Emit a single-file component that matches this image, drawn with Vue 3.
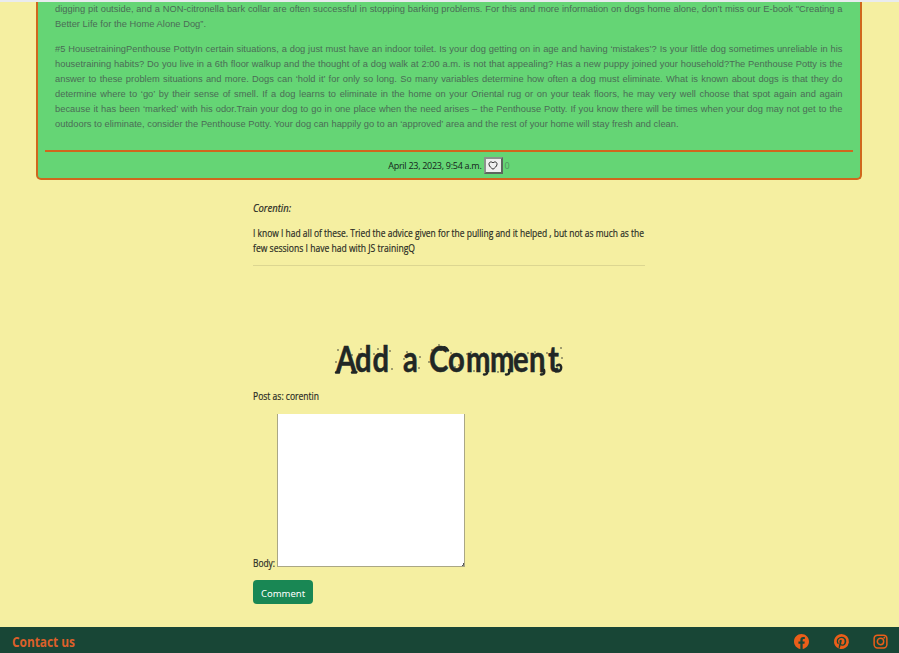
<script setup>
const lines = [
  { t: 'digging pit outside, and a NON-citronella bark collar are often successful in stopping barking problems. For this and more information on dogs home alone, don’t miss our E-book "Creating a' },
  { t: 'Better Life for the Home Alone Dog”.', end: true },
  { t: '#5 HousetrainingPenthouse PottyIn certain situations, a dog just must have an indoor toilet. Is your dog getting on in age and having ‘mistakes’? Is your little dog sometimes unreliable in his', gap: true },
  { t: 'housetraining habits? Do you live in a 6th floor walkup and the thought of a dog walk at 2:00 a.m. is not that appealing? Has a new puppy joined your household?The Penthouse Potty is the' },
  { t: 'answer to these problem situations and more. Dogs can ‘hold it’ for only so long. So many variables determine how often a dog must eliminate. What is known about dogs is that they do' },
  { t: 'determine where to ‘go’ by their sense of smell. If a dog learns to eliminate in the home on your Oriental rug or on your teak floors, he may very well choose that spot again and again' },
  { t: 'because it has been ‘marked’ with his odor.Train your dog to go in one place when the need arises – the Penthouse Potty. If you know there will be times when your dog may not get to the' },
  { t: 'outdoors to eliminate, consider the Penthouse Potty. Your dog can happily go to an ‘approved’ area and the rest of your home will stay fresh and clean.', end: true },
]
const scale = 0.79
const titleX = [1, 20, 37.5, 55, 68, 84, 94, 113, 131, 155, 178, 194, 213].map((x) => (x / scale).toFixed(1)).join(' ')
const dots = [
  [3, 8], [1, 20], [17, 13], [22, 30], [24, 12], [26, 7], [39, 12], [43, 7], [55, 9], [57, 27],
  [69, 17], [72, 10], [85, 15], [84, 26], [94, 20], [97, 8], [104, 3], [116, 11], [120, 25], [124, 23], [132, 12],
  [136, 10], [139, 29], [149, 11], [157, 11], [163, 30], [172, 10], [180, 10], [193, 11], [200, 10], [207, 31], [212, 11], [226, 6], [227, 16],
]
</script>

<template>
  <div class="page">
    <div class="strip"></div>
    <article class="card">
      <div class="copy">
        <p v-for="(l, i) in lines" :key="i" :class="{ end: l.end, gap: l.gap }">{{ l.t }}</p>
      </div>
      <div class="meta">
        <span class="date">April 23, 2023, 9:54 a.m.</span>
        <button class="like" aria-label="Like">
          <svg width="10" height="9" viewBox="0 0 16 15"><path d="M8 13.7C-4 6 2.8-1.8 8 3.1c5.2-4.9 12 2.9 0 10.6Z" fill="none" stroke="#222" stroke-width="1.6" /></svg>
        </button>
        <span class="count">0</span>
      </div>
    </article>

    <main class="column">
      <svg class="row" width="392" height="15"><text class="it" x="0" y="11" textLength="38" lengthAdjust="spacingAndGlyphs">Corentin:</text></svg>
      <svg class="row comment" width="392" height="30">
        <text x="0" y="11" textLength="391" lengthAdjust="spacingAndGlyphs">I know I had all of these. Tried the advice given for the pulling and it helped , but not as much as the</text>
        <text x="0" y="26" textLength="162" lengthAdjust="spacingAndGlyphs">few sessions I have had with JS trainingQ</text>
      </svg>
      <hr />
      <svg class="title" width="230" height="40" viewBox="0 0 230 40">
        <text :transform="`scale(${scale} 1)`" :x="titleX" y="30">Add a Comment</text>
        <path class="curl" d="M1 30.5h3M17 30.5h4M106 7.5q4-5 7 1M152 28q1 5-3 4.500M174 28q1 5-3 4.500M209 28q1 5-3 4.500M221 29.500q6 0 5-5q-1-3-4-1" />
        <circle v-for="(d, i) in dots" :key="i" :cx="d[0]" :cy="d[1]" r=".75" />
      </svg>
      <svg class="row post" width="392" height="15"><text x="0" y="11" textLength="66" lengthAdjust="spacingAndGlyphs">Post as: corentin</text></svg>
      <div class="field">
        <svg class="row" width="24" height="15"><text x="0" y="11" textLength="22" lengthAdjust="spacingAndGlyphs">Body:</text></svg>
        <div class="area"><svg width="3" height="3"><path d="M2.5 0v2.5H1" fill="none" stroke="#555" /></svg></div>
      </div>
      <button class="submit">Comment</button>
    </main>

    <footer>
      <svg class="contact" width="64" height="20"><text x="0" y="16" textLength="63" lengthAdjust="spacingAndGlyphs">Contact us</text></svg>
      <nav>
        <svg width="15" height="15" viewBox="0 0 16 16"><path d="M16 8.05C16 3.6 12.42 0 8 0S0 3.6 0 8.05C0 12.07 2.93 15.4 6.75 16v-5.62H4.72V8.05h2.03V6.28c0-2.02 1.2-3.13 3.02-3.13.88 0 1.8.16 1.8.16v1.98h-1.01c-1 0-1.31.62-1.31 1.26v1.5h2.22l-.35 2.33H9.25V16C13.07 15.4 16 12.07 16 8.05" /></svg>
        <svg width="15" height="15" viewBox="0 0 16 16"><path d="M8 0a8 8 0 0 0-2.92 15.45c-.07-.63-.13-1.6.03-2.3l.94-3.97s-.24-.48-.24-1.19c0-1.11.65-1.94 1.45-1.94.68 0 1.01.51 1.01 1.13 0 .69-.43 1.71-.66 2.66-.19.8.4 1.45 1.18 1.45 1.42 0 2.51-1.5 2.51-3.66 0-1.91-1.37-3.25-3.34-3.25-2.27 0-3.61 1.71-3.61 3.47 0 .69.26 1.43.59 1.83.07.08.08.15.06.23l-.22.9c-.04.15-.12.18-.27.11-1-.47-1.62-1.92-1.62-3.1 0-2.52 1.83-4.84 5.29-4.84 2.77 0 4.93 1.98 4.93 4.62 0 2.75-1.74 4.97-4.15 4.97-.81 0-1.57-.42-1.83-.92l-.5 1.9c-.18.7-.67 1.57-1 2.1A8 8 0 1 0 8 0" /></svg>
        <svg width="15" height="15" viewBox="0 0 16 16"><rect x="1.2" y="1.2" width="13.6" height="13.6" rx="3.6" class="line" /><circle cx="8" cy="8" r="3.4" class="line" /><circle cx="12.1" cy="3.9" r="1" /></svg>
      </nav>
    </footer>
  </div>
</template>

<style>
body { margin: 0; overflow: hidden; }
</style>
<style scoped>
* { box-sizing: border-box; }
.page { width: 899px; height: 653px; background: #f5efa1; display: flex; flex-direction: column; overflow: hidden; font-family: "Open Sans", "Noto Sans", sans-serif; color: #212529; }
.strip { height: 2px; background: #e9ebee; flex: none; }
.card { flex: none; margin: 0 0 0 36px; width: 826px; height: 178px; background: #65d575; border: 2px solid #d0671d; border-top: 0; border-radius: 0 0 5px 5px; padding: 0 7px; }
.copy { height: 150px; padding: 0 9px 0 10px; border-bottom: 2px solid #d0671d; }
p { margin: 0; width: 787.5px; height: 15px; line-height: 15px; font-family: "Liberation Sans", sans-serif; font-size: 9.3px; letter-spacing: .033px; color: #4b6c55; text-align-last: justify; white-space: nowrap; }
p.end { text-align-last: left; }
p.gap { margin-top: 10px; }
.meta { height: 26px; display: flex; align-items: center; justify-content: center; gap: 2px; }
.date { font-size: 9px; letter-spacing: -.28px; color: #15251b; }
.like { width: 19px; height: 17px; padding: 0; display: flex; align-items: center; justify-content: center; background: #efefef; border: 2px solid; border-color: #8a938b #5c665e #5c665e #8a938b; }
.count { font-size: 9px; color: #539361; }
.column { width: 392px; margin-left: 253px; padding-top: 21px; display: flex; flex-direction: column; align-items: flex-start; flex: 1; }
svg { display: block; flex: none; overflow: visible; }
.row { font-size: 10px; fill: #292b24; stroke: #292b24; stroke-width: .2px; }
.area svg { stroke-width: 1px; }
.it { font-style: italic; }
.comment { margin-top: 10px; }
hr { width: 392px; height: 1px; background: #dcd691; border: 0; margin: 9px 0 0; }
.title { margin: 76px 0 0 82px; font-family: Lato, sans-serif; font-weight: 700; font-size: 37px; fill: #212725; }
.title text { stroke: #212725; stroke-width: .5px; stroke-linejoin: round; }
.curl { fill: none; stroke: #212725; stroke-width: 2.5; stroke-linecap: round; }
.post { margin-top: 7px; }
.field { display: flex; align-items: flex-end; margin-top: 10px; height: 153px; }
.field .row { margin-bottom: -4px; }
.area { width: 188px; height: 153px; background: #fff; border: 1px solid #aaa785; border-top: 0; display: flex; align-items: flex-end; justify-content: flex-end; }
.submit { width: 60px; height: 24px; margin-top: 13px; border: 0; border-radius: 4px; background: #198754; color: #fff; font-family: "Noto Sans", sans-serif; font-size: 9.5px; padding: 3px 0 0; }
footer { flex: none; height: 26px; background: #184636; display: flex; align-items: center; justify-content: space-between; padding: 2px 11px 0 12px; }
.contact { font-weight: 700; font-size: 14.5px; fill: #dc602a; }
nav { display: flex; gap: 24.5px; fill: #eb5e19; }
.line { fill: none; stroke: #eb5e19; stroke-width: 1.6; }
</style>
